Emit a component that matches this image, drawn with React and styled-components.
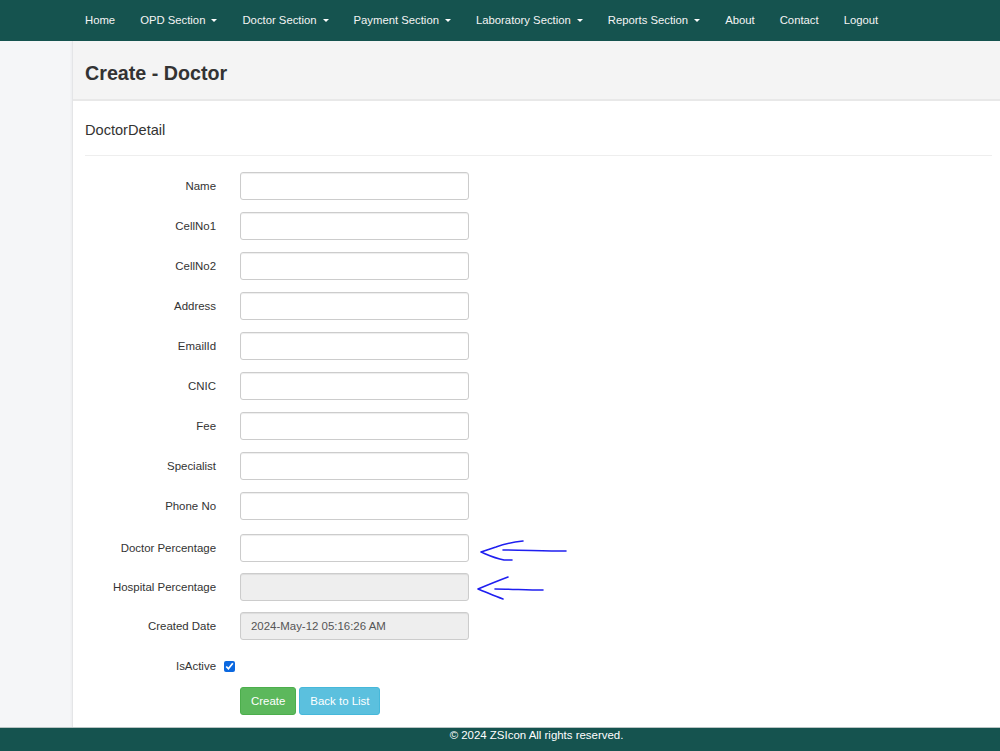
import React from "react";
import styled, { createGlobalStyle } from "styled-components";

const Global = createGlobalStyle`
  html, body { margin: 0; padding: 0; }
  body { font-family: "Liberation Sans", Arial, sans-serif; color: #333; background: #fff; }
  * { box-sizing: border-box; }
`;

const Page = styled.div`
  display: flex;
  flex-direction: column;
  min-height: 100vh;
`;

const NavBar = styled.nav`
  height: 41px;
  background: #15534f;
  display: flex;
  align-items: center;
  padding-left: 85px;
  gap: 25px;
`;

const NavLink = styled.a`
  color: #f4f4f4;
  font-size: 11.3px;
  text-decoration: none;
  display: flex;
  align-items: center;
  line-height: 1;
`;

const Caret = styled.span`
  display: inline-block;
  margin-left: 6px;
  width: 0;
  height: 0;
  border-left: 3.5px solid transparent;
  border-right: 3.5px solid transparent;
  border-top: 3.5px solid #fff;
`;

const Middle = styled.div`
  flex: 1;
  display: flex;
`;

const Sidebar = styled.aside`
  width: 72px;
  background: #f5f6f8;
`;

const Main = styled.main`
  flex: 1;
  background: #fff;
  border-left: 1px solid #e4e5e7;
  box-shadow: -1px 0 2px rgba(0,0,0,0.04);
`;

const Header = styled.header`
  height: 60px;
  background: #f4f4f4;
  border-bottom: 2px solid #e8e8e8;
  display: flex;
  align-items: center;
  padding-left: 12px;
`;

const Title = styled.h2`
  margin: 0;
  font-size: 19.7px;
  font-weight: bold;
  color: #333;
  padding-top: 6px;
`;

const Body = styled.section`
  padding: 0 8px 0 12px;
`;

const SubTitle = styled.h4`
  margin: 0;
  font-size: 14.6px;
  font-weight: normal;
  color: #333;
  height: 54px;
  display: flex;
  align-items: center;
  padding-top: 3px;
`;

const Rule = styled.hr`
  margin: 0 0 16px 0;
  border: 0;
  border-top: 1px solid #eee;
`;

const Row = styled.div`
  display: grid;
  grid-template-columns: 131px 229px auto;
  column-gap: ${p => p.$gap || 24}px;
  align-items: center;
  height: ${p => p.$h || 28}px;
  margin-bottom: ${p => p.$mb ?? 12}px;
`;

const Label = styled.label`
  font-size: 11.45px;
  text-align: right;
  color: #333;
`;

const Input = styled.input`
  width: 229px;
  height: 28px;
  border: 1px solid #ccc;
  border-radius: 3px;
  box-shadow: inset 0 1px 1px rgba(0,0,0,0.075);
  background: ${p => (p.readOnly ? "#eee" : "#fff")};
  font-family: "Liberation Sans", Arial, sans-serif;
  font-size: 11.45px;
  color: #555;
  padding: 0 10px;
  outline: none;
`;

const Check = styled.input`
  width: 11px;
  height: 11px;
  margin: 0;
  accent-color: #0b68e0;
`;

const Buttons = styled.div`
  display: flex;
  gap: 3px;
  padding-left: 155px;
`;

const Button = styled.button`
  height: 28px;
  padding: 0 10px;
  border-radius: 3px;
  font-family: "Liberation Sans", Arial, sans-serif;
  font-size: 11.45px;
  color: #fff;
  background: ${p => (p.$variant === "info" ? "#5bc0de" : "#5cb85c")};
  border: 1px solid ${p => (p.$variant === "info" ? "#46b8da" : "#4cae4c")};
`;

const Arrow = styled.svg`
  display: block;
  margin-left: ${p => p.$ml}px;
  overflow: visible;
`;

const Footer = styled.footer`
  height: 24px;
  background: #15534f;
  border-top: 1px solid #b9c4c3;
  display: flex;
  align-items: flex-start;
  justify-content: center;
  padding: 1px 0 0 73px;
  color: #fff;
  font-size: 11.45px;
`;

const navItems = [
  { t: "Home" },
  { t: "OPD Section", c: true },
  { t: "Doctor Section", c: true },
  { t: "Payment Section", c: true },
  { t: "Laboratory Section", c: true },
  { t: "Reports Section", c: true },
  { t: "About" },
  { t: "Contact" },
  { t: "Logout" },
];

const fields = ["Name", "CellNo1", "CellNo2", "Address", "EmailId", "CNIC", "Fee", "Specialist", "Phone No"];

export default function App() {
  return (
    <Page>
      <Global />
      <NavBar>
        {navItems.map(n => (
          <NavLink key={n.t} href="#">
            {n.t}
            {n.c && <Caret />}
          </NavLink>
        ))}
      </NavBar>
      <Middle>
        <Sidebar />
        <Main>
          <Header>
            <Title>Create - Doctor</Title>
          </Header>
          <Body>
            <SubTitle>DoctorDetail</SubTitle>
            <Rule />
            {fields.map(f => (
              <Row key={f}>
                <Label>{f}</Label>
                <Input />
              </Row>
            ))}
            <Row>
              <Label>Doctor Percentage</Label>
              <Input />
              <Arrow $ml={-17} width="95" height="32" viewBox="0 0 95 32">
                <path d="M47 9 C38 10 28 12 20 15 C14 17 8 19 5 20 C10 22 18 26 28 28 L36 28 M27 18 C45 18 68 19 90 19" fill="none" stroke="#1f1ff0" strokeWidth="1.6" strokeLinecap="round" strokeLinejoin="round" />
              </Arrow>
            </Row>
            <Row>
              <Label>Hospital Percentage</Label>
              <Input readOnly />
              <Arrow $ml={-17} width="70" height="30" viewBox="0 0 70 30">
                <path d="M32 5 C24 8 14 12 2 17 C10 20 18 24 27 27 M19 17 C35 17 50 18 67 18" fill="none" stroke="#1f1ff0" strokeWidth="1.6" strokeLinecap="round" strokeLinejoin="round" />
              </Arrow>
            </Row>
            <Row>
              <Label>Created Date</Label>
              <Input readOnly defaultValue="2024-May-12 05:16:26 AM" />
            </Row>
            <Row $gap={8} $mb={7}>
              <Label>IsActive</Label>
              <Check type="checkbox" defaultChecked />
            </Row>
            <Buttons>
              <Button>Create</Button>
              <Button $variant="info">Back to List</Button>
            </Buttons>
          </Body>
        </Main>
      </Middle>
      <Footer>© 2024 ZSIcon All rights reserved.</Footer>
    </Page>
  );
}
